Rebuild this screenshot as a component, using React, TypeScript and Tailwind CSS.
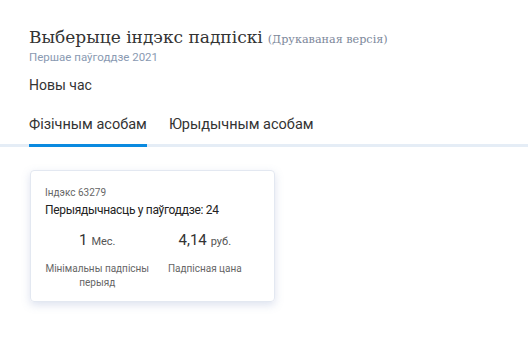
import React from "react";

export default function App() {
  return (
    <div className="w-[528px] h-[346px] bg-white overflow-hidden" style={{ fontFamily: "Roboto, 'Noto Sans', sans-serif" }}>
      <div className="pt-[27px] px-[29px]">
        <div className="flex items-baseline gap-[5px] leading-[21px]">
          <span className="text-[17px] text-[#333]" style={{ fontFamily: "'DejaVu Serif', serif" }}>Выберыце індэкс падпіскі</span>
          <span className="text-[11.2px] text-[#7c879a]" style={{ fontFamily: "'DejaVu Serif', serif" }}>(Друкаваная версія)</span>
        </div>
        <div className="text-[11.5px] leading-[14px] text-[#8a9ab2]">Першае паўгоддзе 2021</div>
        <div className="mt-[11px] text-[14px] leading-[20px] text-[#333]">Новы час</div>
      </div>
      <div className="mt-[20px] flex border-b-[3px] border-[#e5edf6] px-[29px]">
        <div className="text-[14.5px] leading-[20px] text-[#333] pb-[9px] border-b-[3px] border-[#0a8ae0] -mb-[3px]">Фізічным асобам</div>
        <div className="ml-[22px] text-[14.5px] leading-[20px] text-[#333] pb-[9px]">Юрыдычным асобам</div>
      </div>
      <div className="mt-[23px] ml-[30px] w-[245px] h-[132px] rounded-[4px] border border-[#e3e8f1] shadow-[0_3px_8px_rgba(120,140,190,0.25)] px-[14px] pt-[15px]">
        <div className="text-[10px] leading-[14px] text-[#666]">Індэкс 63279</div>
        <div className="mt-[2px] text-[12px] tracking-[-0.3px] leading-[16px] text-[#222]">Перыядычнасць у паўгоддзе: 24</div>
        <div className="mt-[12px] flex">
          <div className="w-[106px] flex flex-col items-center text-center">
            <div className="leading-[20px] text-[#333] whitespace-nowrap"><span className="text-[15px]">1</span> <span className="text-[11px] text-[#555]">Мес.</span></div>
            <div className="mt-[10px] text-[10px] leading-[14px] text-[#666] whitespace-nowrap">Мінімальны падпісны<br />перыяд</div>
          </div>
          <div className="w-[112px] flex flex-col items-center text-center">
            <div className="leading-[20px] text-[#333] whitespace-nowrap"><span className="text-[15px]">4,14</span> <span className="text-[11px] text-[#555]">руб.</span></div>
            <div className="mt-[10px] text-[10px] leading-[14px] text-[#666] whitespace-nowrap">Падпісная цана</div>
          </div>
        </div>
      </div>
    </div>
  );
}
